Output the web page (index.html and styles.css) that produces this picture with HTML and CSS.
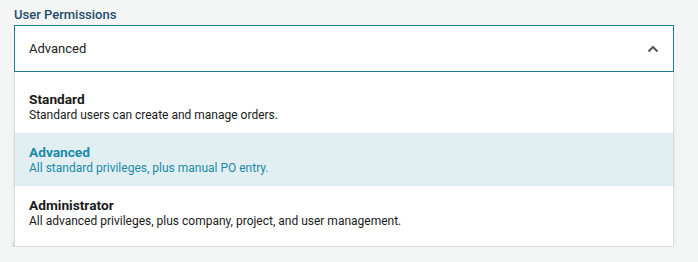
FILE: index.html
```html
<!DOCTYPE html>
<html lang="en">
<head>
  <meta charset="UTF-8" />
  <meta name="viewport" content="width=device-width, initial-scale=1.0" />
  <title>User Permissions</title>
  <link rel="stylesheet" href="styles.css">
</head>
<body>
  <div class="form">
    <div class="field">
      <label class="field-label">User Permissions</label>
      <div class="select-wrap">
        <div class="select open">
          <span class="select-value">Advanced</span>
          <svg class="chevron" width="12" height="8" viewBox="0 0 12 8">
            <path d="M1.5 6.5 L6 2 L10.5 6.5" fill="none" stroke="#555" stroke-width="2" />
          </svg>
        </div>
        <ul class="menu">
          <li class="option">
            <div class="option-title">Standard</div>
            <div class="option-desc">Standard users can create and manage orders.</div>
          </li>
          <li class="option selected">
            <div class="option-title">Advanced</div>
            <div class="option-desc">All standard privileges, plus manual PO entry.</div>
          </li>
          <li class="option">
            <div class="option-title">Administrator</div>
            <div class="option-desc">All advanced privileges, plus company, project, and user management.</div>
          </li>
        </ul>
      </div>
    </div>

    <div class="toggle-row">
      <span class="toggle"><span class="knob"></span></span>
      <span class="toggle-text">Notify by email</span>
    </div>
  </div>
</body>
</html>
```

FILE: styles.css
```css
body {
  margin: 0;
  padding: 7px 25px 0 14px;
  background: #f4f5f5;
  font-family: Roboto, 'Liberation Sans', sans-serif;
  color: #222;
}

.form {
  width: 660px;
}

.field-label {
  display: block;
  font-size: 13px;
  line-height: 16px;
  font-weight: 500;
  color: #1f4d6b;
  margin-bottom: 2px;
}

.select-wrap {
  position: relative;
}

.select {
  box-sizing: border-box;
  height: 47px;
  display: flex;
  align-items: center;
  justify-content: space-between;
  padding: 0 14px 0 14px;
  background: #fff;
  border: 1px solid #1d7d8d;
  font-size: 13px;
  line-height: 16px;
}

.chevron {
  display: block;
}

.menu {
  position: absolute;
  top: 100%;
  left: 0;
  right: 0;
  margin: 0;
  padding: 8px 0 7px;
  list-style: none;
  background: #fff;
  border: 1px solid #dcdcdc;
  border-top: none;
  box-shadow: 0 2px 4px rgba(0, 0, 0, 0.08);
  z-index: 2;
}

.option {
  padding: 11px 14px 10px;
  color: #1a1a1a;
}

.option-title {
  font-size: 13.7px;
  font-weight: 700;
  line-height: 17px;
}

.option-desc {
  font-size: 12px;
  line-height: 15px;
}

.option.selected {
  background: #e1eff3;
  color: #1b8aa6;
}

.toggle-row {
  display: flex;
  align-items: center;
  gap: 10px;
  margin-top: 160px;
  font-size: 13px;
}

.toggle {
  position: relative;
  width: 30px;
  height: 12px;
  margin-left: 6px;
  border-radius: 6px;
  background: #8a8a8a;
}

.knob {
  position: absolute;
  left: -6px;
  top: 3px;
  width: 16px;
  height: 16px;
  border-radius: 50%;
  background: #fff;
  box-shadow: 0 1px 3px rgba(0, 0, 0, 0.35);
}

.toggle-text {
  color: #333;
}
```
